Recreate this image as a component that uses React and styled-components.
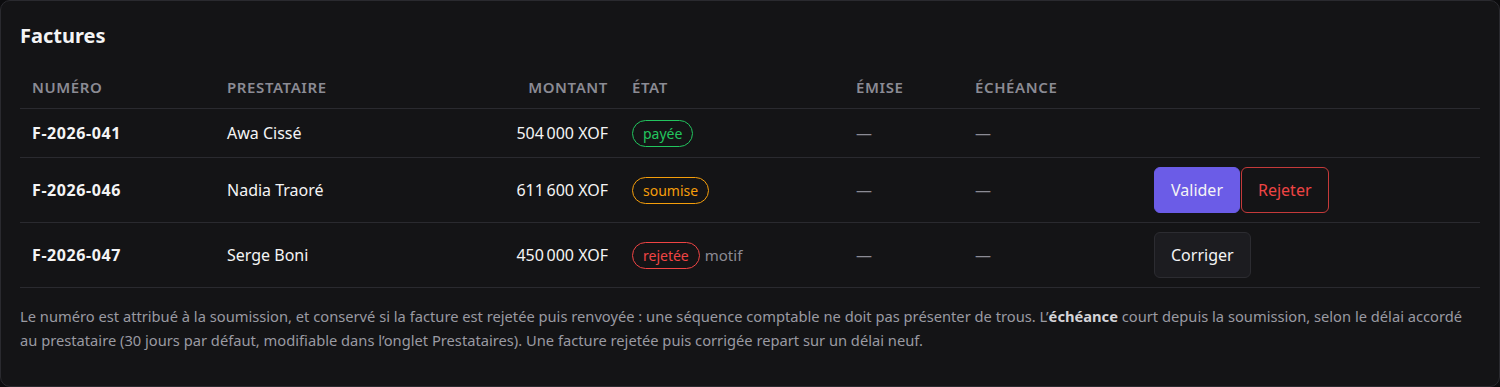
import React from 'react';
import styled, { createGlobalStyle } from 'styled-components';

const GlobalStyle = createGlobalStyle`
  html, body {
    margin: 0;
    padding: 0;
    background: #0c0c0e;
  }
  body {
    font-family: 'Noto Sans', 'Open Sans', sans-serif;
    color: #f4f4f5;
  }
`;

const Card = styled.section`
  box-sizing: border-box;
  width: 1500px;
  height: 387px;
  background: #141416;
  border: 1px solid #2a2a2f;
  border-radius: 10px;
  padding: 20px 19px;
`;

const Title = styled.h2`
  margin: 0 0 15px;
  font-size: 20px;
  font-weight: 700;
  line-height: 30px;
  color: #f4f4f5;
`;

const Table = styled.table`
  width: 100%;
  border-collapse: collapse;
  table-layout: fixed;
`;

const Th = styled.th`
  box-sizing: border-box;
  width: ${(p) => p.$w}px;
  text-align: ${(p) => (p.$right ? 'right' : 'left')};
  padding: 11px 12px;
  font-size: 15px;
  line-height: 20px;
  font-weight: 600;
  letter-spacing: 0.04em;
  text-transform: uppercase;
  color: #8b8b94;
  border-bottom: 1px solid #2a2a2f;
`;

const Row = styled.tr`
  border-bottom: 1px solid #2a2a2f;
  height: ${(p) => (p.$tall ? 65 : 49)}px;
`;

const Td = styled.td`
  padding: 0 12px;
  font-size: 16px;
  text-align: ${(p) => (p.$right ? 'right' : 'left')};
  font-weight: ${(p) => (p.$bold ? 700 : 400)};
  letter-spacing: ${(p) => (p.$bold ? '0.6px' : 'normal')};
  color: ${(p) => (p.$muted ? '#8b8b94' : '#f4f4f5')};
  white-space: nowrap;
`;

const tones = {
  payee: '#22c55e',
  soumise: '#f59e0b',
  rejetee: '#ef4444',
};

const Badge = styled.span`
  display: inline-flex;
  align-items: center;
  box-sizing: border-box;
  height: 27px;
  padding: 0 10px;
  border-radius: 999px;
  border: 1px solid ${(p) => tones[p.$tone]};
  color: ${(p) => tones[p.$tone]};
  font-size: 14px;
  vertical-align: middle;
`;

const Motif = styled.span`
  margin-left: 5px;
  font-size: 15px;
  color: #8b8b94;
  vertical-align: middle;
`;

const Actions = styled.div`
  display: flex;
  gap: 1px;
`;

const Button = styled.button`
  height: 46px;
  padding: 0 16px;
  border-radius: 6px;
  font-family: inherit;
  font-size: 16px;
  cursor: pointer;
  background: ${(p) => (p.$variant === 'primary' ? '#6b5ce7' : p.$variant === 'danger' ? 'transparent' : '#1c1c20')};
  color: ${(p) => (p.$variant === 'danger' ? '#ef4444' : '#f4f4f5')};
  border: 1px solid ${(p) => (p.$variant === 'primary' ? '#6b5ce7' : p.$variant === 'danger' ? '#c53a3a' : '#2c2c31')};
`;

const Note = styled.p`
  margin: 16px 0 0;
  font-size: 14.7px;
  line-height: 24px;
  color: #9a9aa2;

  strong {
    color: #d4d4d8;
  }
`;

const invoices = [
  { id: 'F-2026-041', who: 'Awa Cissé', amount: '504\u202f000 XOF', state: 'payee', label: 'payée' },
  { id: 'F-2026-046', who: 'Nadia Traoré', amount: '611\u202f600 XOF', state: 'soumise', label: 'soumise' },
  { id: 'F-2026-047', who: 'Serge Boni', amount: '450\u202f000 XOF', state: 'rejetee', label: 'rejetée' },
];

const App = () => (
  <>
    <GlobalStyle />
    <Card>
      <Title>Factures</Title>
      <Table>
        <thead>
          <tr>
            <Th $w={195}>Numéro</Th>
            <Th $w={200}>Prestataire</Th>
            <Th $w={205} $right>Montant</Th>
            <Th $w={224}>État</Th>
            <Th $w={119}>Émise</Th>
            <Th $w={179}>Échéance</Th>
            <Th $w={338} />
          </tr>
        </thead>
        <tbody>
          {invoices.map((inv) => (
            <Row key={inv.id} $tall={inv.state !== 'payee'}>
              <Td $bold>{inv.id}</Td>
              <Td>{inv.who}</Td>
              <Td $right>{inv.amount}</Td>
              <Td>
                <Badge $tone={inv.state}>{inv.label}</Badge>
                {inv.state === 'rejetee' && <Motif>motif</Motif>}
              </Td>
              <Td $muted>—</Td>
              <Td $muted>—</Td>
              <Td>
                {inv.state === 'soumise' && (
                  <Actions>
                    <Button $variant="primary">Valider</Button>
                    <Button $variant="danger">Rejeter</Button>
                  </Actions>
                )}
                {inv.state === 'rejetee' && (
                  <Actions>
                    <Button>Corriger</Button>
                  </Actions>
                )}
              </Td>
            </Row>
          ))}
        </tbody>
      </Table>
      <Note>
        Le numéro est attribué à la soumission, et conservé si la facture est rejetée puis renvoyée : une séquence comptable ne doit pas présenter de trous. L’<strong>échéance</strong> court depuis la soumission, selon le délai accordé au prestataire (30 jours par défaut, modifiable dans l’onglet Prestataires). Une facture rejetée puis corrigée repart sur un délai neuf.
      </Note>
    </Card>
  </>
);

export default App;
